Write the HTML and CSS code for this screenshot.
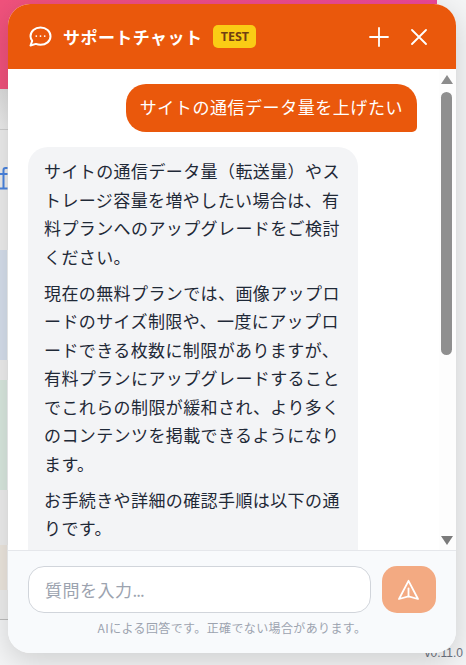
FILE: index.html
```html
<!DOCTYPE html>
<html lang="ja">
<head>
<meta charset="utf-8">
<title>サポートチャット</title>
<link rel="stylesheet" href="styles.css">
</head>
<body>
<div class="page">
  <div class="backdrop">
    <div class="bd-hero"></div>
    <div class="bd-band"></div>
    <div class="bd-strip">
      <svg class="bd-glyph" width="8" height="26" viewBox="0 0 8 26"><path d="M7.5 2H5.5Q3.5 2 3.5 4V21.5M0 8H7.5M0 22.500H7.500" fill="none" stroke="#4a84e0" stroke-width="2"/></svg>
    </div>
    <div class="bd-block bd-blue"></div>
    <div class="bd-gap"></div>
    <div class="bd-block bd-green"></div>
    <div class="bd-gap bd-gap-tall"></div>
    <div class="bd-block bd-beige"></div>
    <div class="bd-end"></div>
    <div class="bd-version">v0.11.0</div>
  </div>

  <section class="window">
    <header class="head">
      <svg class="head-icon" width="23" height="21" viewBox="0 0 23 21" fill="none" stroke="#fff" stroke-width="2" stroke-linejoin="round" stroke-linecap="round">
        <path d="M1.500 19.500L3.200 14.800C2 13.400 1.500 12 1.500 10.300C1.500 5.400 5.900 1.500 11.500 1.500C17.100 1.500 21.500 5.400 21.500 10.300C21.500 15.200 17.100 18.800 11.500 18.800C9.800 18.800 8.300 18.500 6.900 17.900Z"/>
        <path d="M7.300 10.100h.01M11.500 10.100h.01M15.700 10.100h.01" stroke-width="1.800"/>
      </svg>
      <h1 class="title">サポートチャット</h1>
      <span class="badge">TEST</span>
      <svg class="action action-plus" width="20" height="20" viewBox="0 0 20 20" fill="none" stroke="#fff" stroke-width="1.800" stroke-linecap="round"><path d="M10 1v18M1 10h18"/></svg>
      <svg class="action action-close" width="16" height="16" viewBox="0 0 16 16" fill="none" stroke="#fff" stroke-width="1.800" stroke-linecap="round"><path d="M1 1l14 14M15 1L1 15"/></svg>
    </header>

    <div class="body">
      <div class="messages">
        <div class="msg-user">サイトの通信データ量を上げたい</div>
        <div class="msg-bot">
          <p>サイトの通信データ量（転送量）やストレージ容量を増やしたい場合は、有料プランへのアップグレードをご検討ください。</p>
          <p>現在の無料プランでは、画像アップロードのサイズ制限や、一度にアップロードできる枚数に制限がありますが、有料プランにアップグレードすることでこれらの制限が緩和され、より多くのコンテンツを掲載できるようになります。</p>
          <p>お手続きや詳細の確認手順は以下の通りです。</p>
        </div>
      </div>
      <div class="scrollbar">
        <span class="arrow arrow-up"></span>
        <span class="thumb"></span>
        <span class="arrow arrow-down"></span>
      </div>
    </div>

    <footer class="foot">
      <div class="composer">
        <div class="input">質問を入力<span class="dots">...</span></div>
        <button class="send" type="button" aria-label="送信">
          <svg width="22" height="22" viewBox="0 0 22 22" fill="none" stroke="#fff" stroke-width="1.800" stroke-linejoin="round" stroke-linecap="round"><path d="M10.500 1.800L20 20L10.500 17.300L1 20Z"/><path d="M10.500 9.500V17.300"/></svg>
        </button>
      </div>
      <p class="note">AIによる回答です。正確でない場合があります。</p>
    </footer>
  </section>
</div>
</body>
</html>
```

FILE: styles.css
```css
* { box-sizing: border-box; }

html, body {
  margin: 0;
  padding: 0;
  height: 665px;
  overflow: hidden;
}

body {
  font-family: "Noto Sans CJK JP", "Noto Sans", sans-serif;
  background: #f6f7f8;
}

.page {
  position: relative;
  width: 466px;
  height: 665px;
  overflow: hidden;
}

/* page behind the chat window */
.backdrop {
  position: absolute;
  inset: 0;
  display: flex;
  flex-direction: column;
  background: #f4f5f6;
}

.bd-hero {
  width: 437px;
  height: 89px;
  flex: none;
  background: linear-gradient(90deg, #f0527c, #ec4899);
}

.bd-band {
  width: 8px;
  height: 41px;
  flex: none;
  border-bottom: 1px solid #cfcfcf;
  background: linear-gradient(#dcdcdc, #ececec);
}

.bd-strip {
  width: 8px;
  height: 120px;
  flex: none;
  padding-top: 36px;
  background: #ededed;
}

.bd-glyph { display: block; }

.bd-block {
  width: 7px;
  flex: none;
}

.bd-blue { height: 110px; background: #d6dfec; }
.bd-green { height: 110px; background: #d9e8df; }
.bd-beige { height: 45px; background: #ece6de; }

.bd-gap {
  width: 8px;
  height: 20px;
  flex: none;
  background: #ededed;
}

.bd-gap-tall { height: 55px; }

.bd-end {
  width: 8px;
  height: 30px;
  flex: none;
  border-bottom: 1px solid #bdbdbd;
  background: #ededed;
}

.bd-version {
  position: absolute;
  right: 3px;
  top: 645px;
  font-family: "Liberation Sans", sans-serif;
  font-size: 12px;
  line-height: 16px;
  color: #6b7280;
}

/* chat window */
.window {
  position: absolute;
  left: 8px;
  top: 4px;
  width: 448px;
  height: 649px;
  display: flex;
  flex-direction: column;
  overflow: hidden;
  background: #fff;
  border-radius: 22px;
  box-shadow: 0 8px 30px rgba(0, 0, 0, 0.16);
}

.head {
  flex: none;
  height: 65px;
  display: flex;
  align-items: center;
  padding: 0 29px 0 21px;
  background: #ea580c;
  color: #fff;
}

.head-icon { flex: none; }

.title {
  margin: 0 0 0 11px;
  font-size: 17px;
  font-weight: 700;
  letter-spacing: 0.45px;
  line-height: 24px;
}

.badge {
  margin-left: 11px;
  width: 43px;
  height: 23px;
  border-radius: 5px;
  background: #facc15;
  color: #713f12;
  font-family: "Noto Sans", sans-serif;
  font-size: 12.500px;
  font-weight: 700;
  line-height: 23px;
  text-align: center;
}

.action { flex: none; }
.action-plus { margin-left: auto; }
.action-close { margin-left: 22px; }

.body {
  flex: 1;
  min-height: 0;
  display: flex;
}

.messages {
  flex: 1;
  min-width: 0;
  overflow: hidden;
  padding: 15px 22px 0 20px;
  display: flex;
  flex-direction: column;
  align-items: flex-start;
  gap: 15px;
}

.msg-user {
  flex: none;
  align-self: flex-end;
  padding: 9px 14px 11px;
  background: #ea580c;
  color: #fff;
  font-size: 17px;
  letter-spacing: 0.55px;
  line-height: 28px;
  border-radius: 20px 20px 5px 20px;
}

.msg-bot {
  flex: none;
  width: 330px;
  padding: 10px 16px 40px;
  background: #f3f4f6;
  color: #1f2937;
  font-size: 17px;
  letter-spacing: 0.4px;
  line-height: 28.500px;
  border-radius: 20px 20px 20px 5px;
}

.msg-bot p { margin: 0 0 7.500px; }

.scrollbar {
  flex: none;
  width: 17px;
  padding-right: 2px;
  display: flex;
  flex-direction: column;
  align-items: center;
  background: #fdfdfd;
}

.arrow {
  flex: none;
  width: 0;
  height: 0;
  border-left: 6px solid transparent;
  border-right: 6px solid transparent;
}

.arrow-up {
  margin-top: 6px;
  border-bottom: 9px solid #8c8c8c;
}

.arrow-down {
  margin-top: 181px;
  border-top: 9px solid #7b7b7b;
}

.thumb {
  flex: none;
  width: 11px;
  height: 263px;
  margin-top: 8px;
  border-radius: 5.500px;
  background: #8f8f8f;
}

.foot {
  flex: none;
  height: 103px;
  padding: 15px 20px 0;
  border-top: 1px solid #e5e7eb;
  background: #f8fafc;
}

.composer {
  display: flex;
  gap: 11px;
  height: 47px;
}

.input {
  flex: 1;
  padding-left: 16px;
  background: #fff;
  border: 1px solid #d1d5db;
  border-radius: 16px;
  color: #9ca3af;
  font-size: 17px;
  letter-spacing: 0.5px;
  line-height: 46px;
}

.dots {
  letter-spacing: -1px;
}

.send {
  flex: none;
  width: 54px;
  padding: 0;
  border: 0;
  border-radius: 15px;
  background: #f3aa82;
  display: flex;
  align-items: center;
  justify-content: center;
}

.note {
  margin: 7px 0 0;
  color: #9ca3af;
  font-size: 12px;
  letter-spacing: 0.380px;
  line-height: 16px;
  text-align: center;
}
```
